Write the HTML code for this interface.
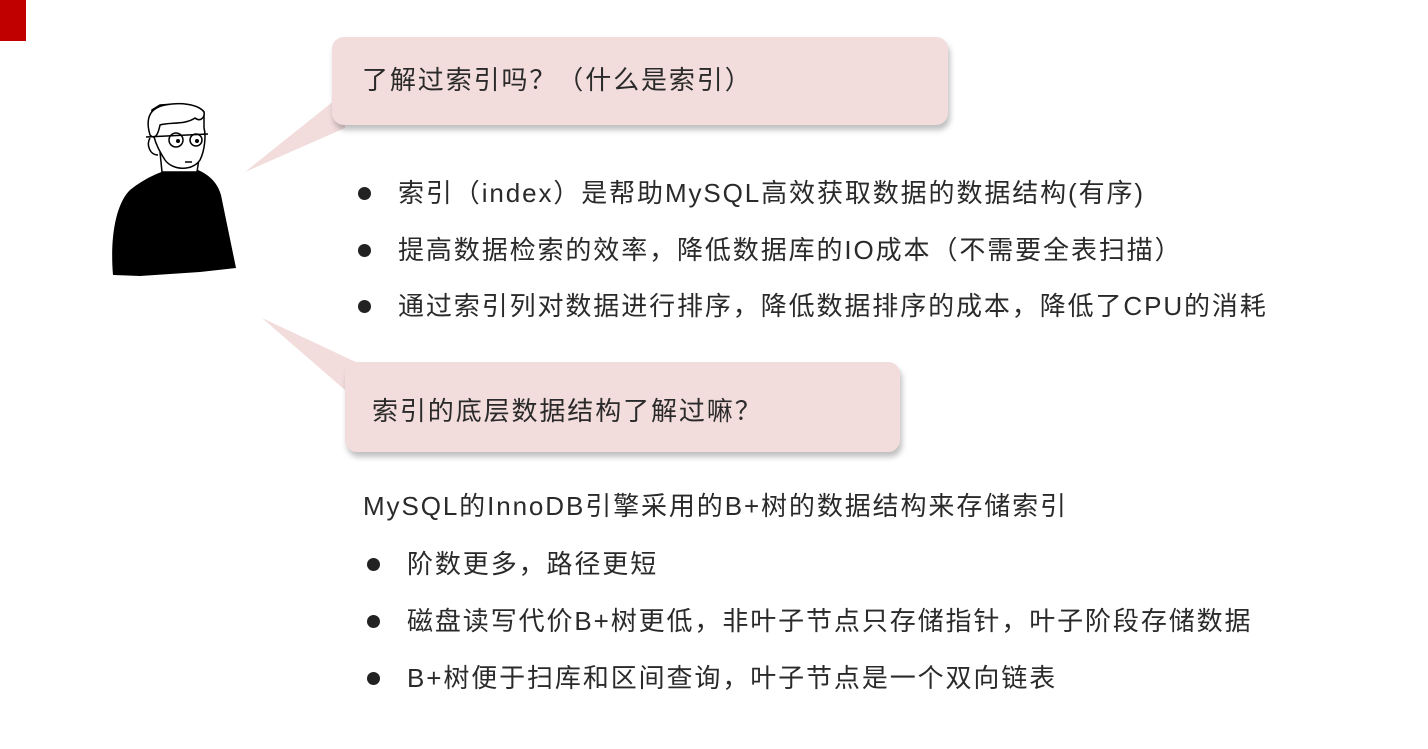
<!DOCTYPE html>
<html><head><meta charset="utf-8"><style>
body{margin:0;width:1428px;height:749px;background:#fff;position:relative;overflow:hidden;font-family:"Liberation Sans","Noto Sans CJK SC",sans-serif;color:#2a2a2a}
.t{position:absolute;white-space:nowrap;font-size:26px;line-height:28px;letter-spacing:1.9px}
.b{position:absolute;width:13px;height:13px;border-radius:50%;background:#222}
.bub{position:absolute;background:#f2dcdc;border-radius:12px;box-shadow:2px 5px 6px rgba(0,0,0,.25)}
</style></head><body>
<div style="position:absolute;left:0;top:0;width:26px;height:41px;background:#c00000"></div>
<svg style="position:absolute;left:0;top:0" width="1428" height="749">
<polygon points="245,172 345,92 345,128" fill="#f2dcdc"/>
<polygon points="262,318 360,364 345,390" fill="#f2dcdc"/>
<path d="M113,275 C110,240 115,205 130,190 C145,178 160,172 168,170 L198,170 C210,175 220,185 222,200 L236,268 L200,272 L140,276 Z" fill="#000"/>
<path d="M160,152 L162,172 L197,172 L200,152" fill="#fff" stroke="#000" stroke-width="1.5"/>
<path d="M152,110 C150,130 155,145 165,160 C172,170 192,172 200,160 C205,150 206,135 204,128 L204,112 C200,105 180,103 160,105 Z" fill="#fff" stroke="#000" stroke-width="1.5"/>
<path d="M150,135 C145,118 150,108 165,105 C180,102 198,104 204,112 C205,118 200,122 195,118 C185,125 170,122 160,125 C158,135 155,140 150,135 Z" fill="#fff" stroke="#000" stroke-width="1.5"/>
<path d="M150,138 C146,145 150,155 158,155" fill="none" stroke="#000" stroke-width="1.5"/>
<circle cx="176" cy="140" r="7" fill="none" stroke="#000" stroke-width="1.5"/>
<circle cx="196" cy="140" r="6" fill="none" stroke="#000" stroke-width="1.5"/>
<line x1="146" y1="137" x2="208" y2="134" stroke="#000" stroke-width="1.5"/>
<circle cx="178" cy="141" r="2" fill="#000"/><circle cx="197" cy="141" r="2" fill="#000"/>
<line x1="185" y1="162" x2="192" y2="162" stroke="#000" stroke-width="1.5"/>
</svg>
<div class="bub" style="left:332px;top:37px;width:616px;height:88px"></div>
<div class="t" style="left:362px;top:66px">了解过索引吗？（什么是索引）</div>
<div class="b" style="left:358px;top:187px"></div>
<div class="t" style="left:398px;top:179px">索引（index）是帮助MySQL高效获取数据的数据结构(有序)</div>
<div class="b" style="left:358px;top:244px"></div>
<div class="t" style="left:398px;top:236px">提高数据检索的效率，降低数据库的IO成本（不需要全表扫描）</div>
<div class="b" style="left:358px;top:300px"></div>
<div class="t" style="left:398px;top:292px">通过索引列对数据进行排序，降低数据排序的成本，降低了CPU的消耗</div>
<div class="bub" style="left:345px;top:362px;width:555px;height:90px"></div>
<div class="t" style="left:372px;top:397px">索引的底层数据结构了解过嘛？</div>
<div class="t" style="left:363px;top:492px">MySQL的InnoDB引擎采用的B+树的数据结构来存储索引</div>
<div class="b" style="left:367px;top:558px"></div>
<div class="t" style="left:407px;top:550px">阶数更多，路径更短</div>
<div class="b" style="left:367px;top:615px"></div>
<div class="t" style="left:407px;top:607px">磁盘读写代价B+树更低，非叶子节点只存储指针，叶子阶段存储数据</div>
<div class="b" style="left:367px;top:672px"></div>
<div class="t" style="left:407px;top:664px">B+树便于扫库和区间查询，叶子节点是一个双向链表</div>
</body></html>
